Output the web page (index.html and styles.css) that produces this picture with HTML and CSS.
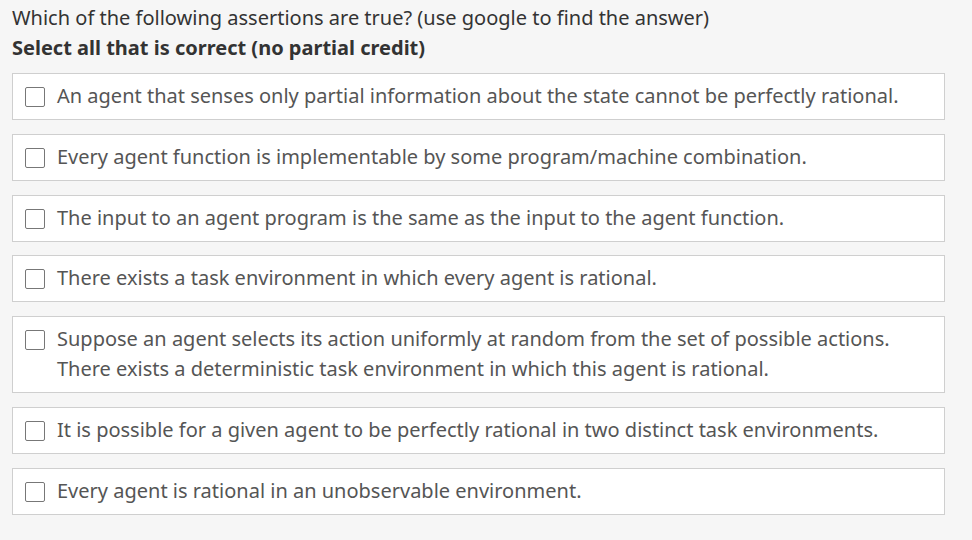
FILE: index.html
```html
<!DOCTYPE html>
<html>
<head>
<meta charset="utf-8">
<link rel="stylesheet" href="styles.css">
</head>
<body>
<div class="quiz">
  <div class="prompt">
    <div class="q">Which of the following assertions are true? (use google to find the answer)</div>
    <div class="q bold">Select all that is correct (no partial credit)</div>
  </div>
  <div class="options">
    <label class="opt"><span class="box"></span><span class="txt">An agent that senses only partial information about the state cannot be perfectly rational.</span></label>
    <label class="opt"><span class="box"></span><span class="txt">Every agent function is implementable by some program/machine combination.</span></label>
    <label class="opt"><span class="box"></span><span class="txt">The input to an agent program is the same as the input to the agent function.</span></label>
    <label class="opt"><span class="box"></span><span class="txt">There exists a task environment in which every agent is rational.</span></label>
    <label class="opt"><span class="box"></span><span class="txt">Suppose an agent selects its action uniformly at random from the set of possible actions.<br>There exists a deterministic task environment in which this agent is rational.</span></label>
    <label class="opt"><span class="box"></span><span class="txt">It is possible for a given agent to be perfectly rational in two distinct task environments.</span></label>
    <label class="opt"><span class="box"></span><span class="txt">Every agent is rational in an unobservable environment.</span></label>
  </div>
</div>
</body>
</html>
```
FILE: styles.css
```css
html, body {
  margin: 0;
  padding: 0;
  background: #f6f6f6;
}
body {
  font-family: "Noto Sans", "Open Sans", sans-serif;
  font-size: 20px;
  line-height: 30px;
}
.quiz {
  padding: 3px 27px 0 12px;
}
.prompt {
  color: #333;
  margin-bottom: 10px;
}
.bold {
  font-weight: 700;
}
.options {
  display: flex;
  flex-direction: column;
  gap: 13.8px;
}
.opt {
  display: flex;
  align-items: flex-start;
  background: #fff;
  border: 1px solid #cfcfcf;
  padding: 7px 12px 8px;
  color: #555;
}
.box {
  flex: none;
  width: 18px;
  height: 18px;
  border: 1px solid #777;
  border-radius: 2px;
  background: #fff;
  margin-top: 6px;
  margin-right: 12px;
}
```
